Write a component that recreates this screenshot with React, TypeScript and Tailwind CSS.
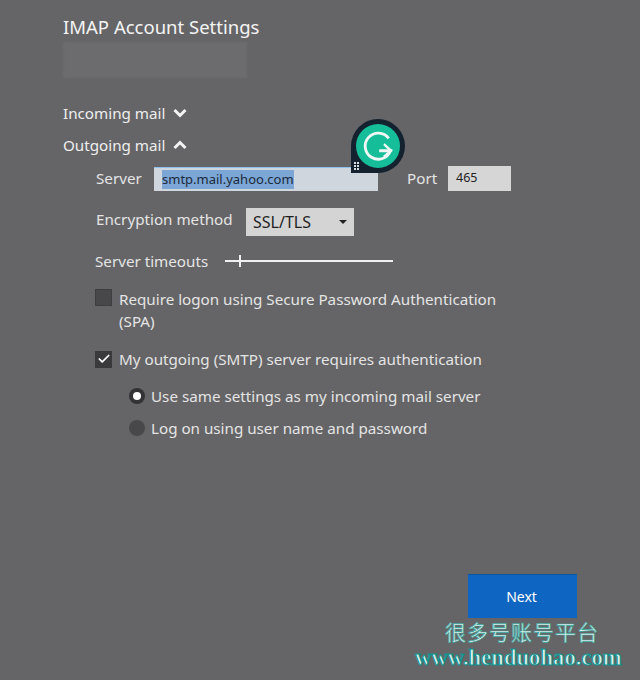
import { Check } from "lucide-react";

const FONT = "font-['Noto_Sans','Open_Sans',sans-serif]";

function Chevron({ up }: { up?: boolean }) {
    return (
        <svg viewBox="0 0 14 10" className="w-[14px] h-[10px]" fill="none" stroke="#f4f4f4" strokeWidth="3">
            <path d={up ? "M1.5 8 7 2.5 12.5 8" : "M1.5 2 7 7.5 12.5 2"} />
        </svg>
    );
}

function GrammarlyBadge() {
    return (
        <div className="absolute left-[351px] top-[119px] w-[54px] h-[54px] rounded-full rounded-bl-[4px] bg-[#14212e] flex items-center justify-center">
            <div className="w-[44px] h-[44px] rounded-full bg-[#15bd99] flex items-center justify-center">
                <svg viewBox="0 0 32 32" className="w-[38px] h-[38px]" fill="none" stroke="#eef7f4" strokeWidth="2.4">
                    <path d="M25 9.5A11 11 0 1 0 26.5 20H17" />
                    <path d="M21 14.5 27 20l-6 5" strokeWidth="2" />
                </svg>
            </div>
            <div className="absolute left-[3px] bottom-[3px] grid grid-cols-2 gap-[1px]">
                {[0, 1, 2, 3, 4, 5].map((i) => (
                    <span key={i} className="w-[2px] h-[2px] bg-[#d8dde0]" />
                ))}
            </div>
        </div>
    );
}

export default function App() {
    return (
        <div className={`relative w-[640px] h-[680px] overflow-hidden bg-[#656567] text-[#eeeeee] ${FONT}`}>
            <div className="pl-[63px] pt-[13px]">
                <h1 className="text-[18.5px] leading-[28px] text-[#f4f4f4]">IMAP Account Settings</h1>
                {/* blurred out e-mail address */}
                <div className="w-[184px] h-[36px] mt-[1px] bg-[#6c6c6e] blur-[1px]" />

                <div className="mt-[23px] flex items-center gap-[8px] h-[24px] text-[15.2px]">
                    Incoming mail
                    <Chevron />
                </div>
                <div className="mt-[8px] flex items-center gap-[8px] h-[24px] text-[15.2px]">
                    Outgoing mail
                    <Chevron up />
                </div>

                <div className="ml-[33px] text-[15.2px] text-[#e4e4e4]">
                    <div className="mt-[8px] flex items-center h-[26px]">
                        <span className="w-[58px]">Server</span>
                        <div className="w-[224px] h-[24px] mt-[1px] bg-[#d0d6de] border-t border-[#8fc0e8] pl-[8px] flex items-center">
                            <span className="bg-[#7ba6d6] text-[#1d2a3a] text-[13px] leading-[19px]">smtp.mail.yahoo.com</span>
                        </div>
                        <span className="ml-[29px] w-[41px]">Port</span>
                        <div className="w-[63px] h-[25px] mt-[1px] bg-[#d6d6d6] pl-[8px] flex items-center text-[12.5px] text-[#222222]">465</div>
                    </div>

                    <div className="mt-[17px] flex items-center h-[28px]">
                        <span className="w-[150px] -mt-[6px]">Encryption method</span>
                        <div className="w-[108px] h-[28px] bg-[#d4d4d4] pl-[7px] pr-[7px] flex items-center justify-between text-[16px] text-[#1f1f1f]">
                            SSL/TLS
                            <span className="w-0 h-0 border-x-[4px] border-x-transparent border-t-[4px] border-t-[#222222]" />
                        </div>
                    </div>

                    <div className="mt-[13px] -ml-[1px] flex items-center h-[24px]">
                        <span className="w-[130px]">Server timeouts</span>
                        <div className="relative w-[168px] h-[2px] bg-[#f0f0f0]">
                            <span className="absolute left-[14px] -top-[5px] w-[2px] h-[12px] bg-[#f0f0f0]" />
                        </div>
                    </div>

                    <div className="mt-[15px] flex items-start -ml-[1px]">
                        <span className="w-[17px] h-[17px] mt-[1px] bg-[#48484a] border border-[#3e3e40]" />
                        <p className="ml-[7px] w-[390px] leading-[22px]">
                            Require logon using Secure Password Authentication (SPA)
                        </p>
                    </div>

                    <div className="mt-[16px] -ml-[1px] flex items-center h-[22px]">
                        <span className="w-[17px] h-[17px] bg-[#3a3a3c] flex items-center justify-center">
                            <Check className="w-[14px] h-[14px] text-white" strokeWidth={3} />
                        </span>
                        <span className="ml-[7px]">My outgoing (SMTP) server requires authentication</span>
                    </div>

                    <div className="mt-[15px] ml-[33px] flex items-center h-[22px]">
                        <span className="w-[16px] h-[16px] rounded-full bg-[#333335] flex items-center justify-center">
                            <span className="w-[8px] h-[8px] rounded-full bg-white" />
                        </span>
                        <span className="ml-[6px]">Use same settings as my incoming mail server</span>
                    </div>

                    <div className="mt-[10px] ml-[33px] flex items-center h-[22px]">
                        <span className="w-[16px] h-[16px] rounded-full bg-[#48484a]" />
                        <span className="ml-[6px]">Log on using user name and password</span>
                    </div>
                </div>
            </div>

            <div className="mt-[135px] ml-[468px] w-[109px] h-[44px] bg-[#0f66c2] border-t border-[#0a549f] flex items-center justify-center text-[14px] text-white pr-[2px]">
                Next
            </div>

            <GrammarlyBadge />

            {/* site watermark */}
            <div className="absolute left-[445px] top-[618px] text-[21px] leading-[26px] tracking-[1px] text-[#e6f2f0] font-['Noto_Sans_CJK_SC',sans-serif] [-webkit-text-stroke:0.7px_#3aa6a0]">
                很多号账号平台
            </div>
            <div className="absolute left-[415px] top-[645px] text-[22.7px] leading-[26px] font-bold text-[#d8f2ee] font-['Liberation_Serif',serif] [-webkit-text-stroke:1px_#0f8f8c]">
                www.henduohao.com
            </div>
        </div>
    );
}
